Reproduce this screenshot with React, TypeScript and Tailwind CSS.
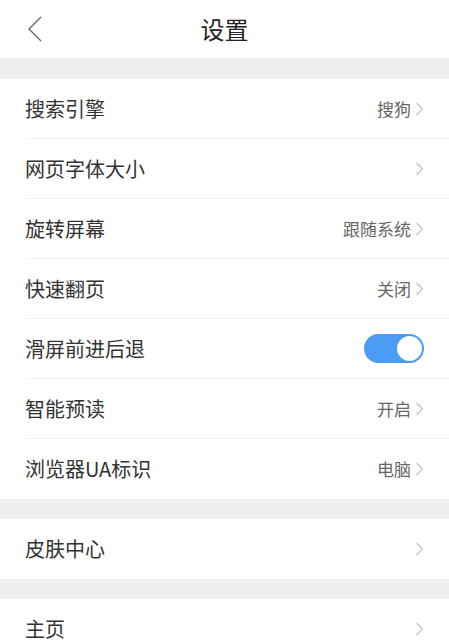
type Row = { label: string; value?: string; toggle?: boolean };

const mainRows: Row[] = [
  { label: '搜索引擎', value: '搜狗' },
  { label: '网页字体大小' },
  { label: '旋转屏幕', value: '跟随系统' },
  { label: '快速翻页', value: '关闭' },
  { label: '滑屏前进后退', toggle: true },
  { label: '智能预读', value: '开启' },
  { label: '浏览器UA标识', value: '电脑' },
];

function Arrow() {
  return (
    <svg width="9" height="14" viewBox="0 0 9 14" className="ml-[4px]">
      <path d="M1.5 1 L7.5 7 L1.5 13" fill="none" stroke="#c4c4c4" strokeWidth="1.3" />
    </svg>
  );
}

function SettingRow({ row, last }: { row: Row; last?: boolean }) {
  return (
    <div className="pl-[25px] bg-white">
      <div
        className={`h-[60px] flex items-center justify-between pr-[25px] ${
          last ? '' : 'border-b border-[#f0f0f0]'
        }`}
      >
        <span className="text-[20px] text-[#333]">{row.label}</span>
        {row.toggle ? (
          <div className="w-[60px] h-[29px] rounded-full bg-[#4a9cf6] flex items-center justify-end pr-[2px]">
            <div className="w-[25px] h-[25px] rounded-full bg-white" />
          </div>
        ) : (
          <div className="flex items-center">
            {row.value && <span className="text-[17px] text-[#666]">{row.value}</span>}
            <Arrow />
          </div>
        )}
      </div>
    </div>
  );
}

export default function App() {
  return (
    <div
      className="w-[449px] h-[644px] overflow-hidden bg-[#efefef]"
      style={{ fontFamily: '"Noto Sans CJK SC", "Noto Sans", sans-serif' }}
    >
      <div className="h-[58px] bg-white relative flex items-center justify-center">
        <svg width="16" height="26" viewBox="0 0 16 26" className="absolute left-[27px] top-[16px]">
          <path d="M14 1 L2 13 L14 25" fill="none" stroke="#666" strokeWidth="1.4" />
        </svg>
        <span className="text-[24px] text-[#222]">设置</span>
      </div>
      <div className="h-[21px]" />
      <div>
        {mainRows.map((r, i) => (
          <SettingRow key={r.label} row={r} last={i === mainRows.length - 1} />
        ))}
      </div>
      <div className="h-[20px]" />
      <SettingRow row={{ label: '皮肤中心' }} last />
      <div className="h-[20px]" />
      <SettingRow row={{ label: '主页' }} last />
    </div>
  );
}
